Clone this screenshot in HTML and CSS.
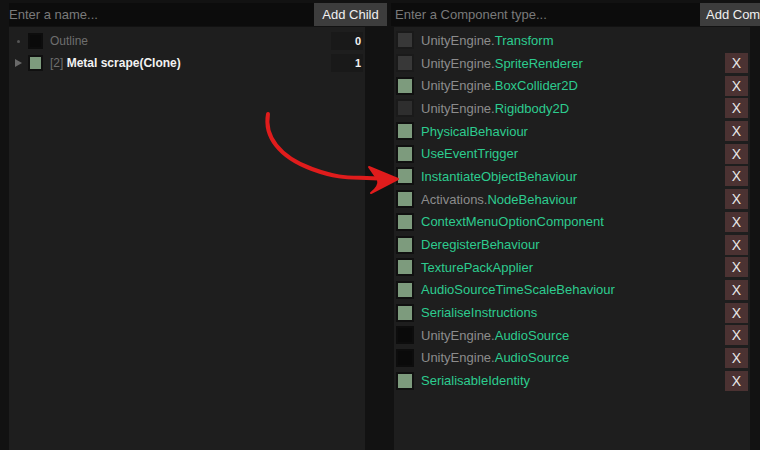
FILE: index.html
```html
<!DOCTYPE html>
<html lang="en">
<head>
    <meta charset="UTF-8">
    <title>Inspector</title>
    <link rel="stylesheet" href="styles.css">
</head>
<body>

    <div class="app">
        <!-- hierarchy -->
        <section class="column tree-column">
            <div class="toolbar">
                <input class="search" type="text" placeholder="Enter a name...">
                <button class="add-btn">Add Child</button>
            </div>
            <div class="panel">
                <div class="tree-row">
                    <span class="toggle"><span class="dot"></span></span>
                    <span class="swatch black"></span>
                    <span class="tree-name dim">Outline</span>
                    <span class="order">0</span>
                </div>
                <div class="tree-row">
                    <span class="toggle">
                        <svg width="7" height="8" viewBox="0 0 7 8"><polygon points="0,0 7,4 0,8" fill="#6a6a6a"/></svg>
                    </span>
                    <span class="swatch green"></span>
                    <span class="tree-name"><span class="dim">[2]</span> <b>Metal scrape(Clone)</b></span>
                    <span class="order">1</span>
                </div>
            </div>
        </section>

        <!-- components -->
        <section class="column component-column">
            <div class="toolbar">
                <input class="search" type="text" placeholder="Enter a Component type...">
                <button class="add-btn">Add Component</button>
            </div>
            <div class="panel">
                <div class="comp-row"><span class="swatch grey"></span><span class="comp-name"><span class="ns">UnityEngine.</span>Transform</span></div>
                <div class="comp-row"><span class="swatch grey"></span><span class="comp-name"><span class="ns">UnityEngine.</span>SpriteRenderer</span><button class="remove">X</button></div>
                <div class="comp-row"><span class="swatch green"></span><span class="comp-name"><span class="ns">UnityEngine.</span>BoxCollider2D</span><button class="remove">X</button></div>
                <div class="comp-row"><span class="swatch grey dark"></span><span class="comp-name"><span class="ns">UnityEngine.</span>Rigidbody2D</span><button class="remove">X</button></div>
                <div class="comp-row"><span class="swatch green"></span><span class="comp-name">PhysicalBehaviour</span><button class="remove">X</button></div>
                <div class="comp-row"><span class="swatch green"></span><span class="comp-name">UseEventTrigger</span><button class="remove">X</button></div>
                <div class="comp-row"><span class="swatch green"></span><span class="comp-name">InstantiateObjectBehaviour</span><button class="remove">X</button></div>
                <div class="comp-row"><span class="swatch green"></span><span class="comp-name"><span class="ns">Activations.</span>NodeBehaviour</span><button class="remove">X</button></div>
                <div class="comp-row"><span class="swatch green"></span><span class="comp-name">ContextMenuOptionComponent</span><button class="remove">X</button></div>
                <div class="comp-row"><span class="swatch green"></span><span class="comp-name">DeregisterBehaviour</span><button class="remove">X</button></div>
                <div class="comp-row"><span class="swatch green"></span><span class="comp-name">TexturePackApplier</span><button class="remove">X</button></div>
                <div class="comp-row"><span class="swatch green"></span><span class="comp-name">AudioSourceTimeScaleBehaviour</span><button class="remove">X</button></div>
                <div class="comp-row"><span class="swatch green"></span><span class="comp-name">SerialiseInstructions</span><button class="remove">X</button></div>
                <div class="comp-row"><span class="swatch black"></span><span class="comp-name"><span class="ns">UnityEngine.</span>AudioSource</span><button class="remove">X</button></div>
                <div class="comp-row"><span class="swatch black"></span><span class="comp-name"><span class="ns">UnityEngine.</span>AudioSource</span><button class="remove">X</button></div>
                <div class="comp-row"><span class="swatch green"></span><span class="comp-name">SerialisableIdentity</span><button class="remove">X</button></div>
            </div>
        </section>
    </div>

    <!-- hand drawn annotation on top -->
    <svg class="annotation" width="760" height="450" viewBox="0 0 760 450">
        <path d="M268 114 C 264 136, 279 157, 312 169 S 352 176, 384 179" fill="none" stroke="#e01c1c" stroke-width="4" stroke-linecap="round"/>
        <path d="M369 167 L 398 179 L 371 193 Q 380 186, 378 180 Z" fill="#e01c1c" stroke="#e01c1c" stroke-width="2" stroke-linejoin="round"/>
    </svg>

</body>
</html>
```

FILE: styles.css
```css
body {
    margin: 0;
    background-color: #121212;
    font-family: "Liberation Sans", Arial, sans-serif;
    overflow: hidden;
}

.app {
    display: flex;
    height: 100vh;
    padding-left: 9px;
}

.column {
    display: flex;
    flex-direction: column;
}

.tree-column {
    width: 378px;
    flex: none;
}

.component-column {
    margin-left: 4px;
    flex: 1;
    min-width: 0;
}

/* top bars */
.toolbar {
    display: flex;
    height: 23px;
    margin-top: 3px;
    margin-bottom: 1px;
}

.search {
    flex: 1;
    min-width: 0;
    background-color: #0c0c0c;
    border: none;
    outline: none;
    padding: 0;
    color: #dddddd;
    font-family: "Liberation Sans", Arial, sans-serif;
    font-size: 13px;
}

    .search::placeholder {
        color: #7a7a7a;
    }

.add-btn {
    flex: none;
    width: 73px;
    padding: 0;
    background-color: #3d3d3d;
    color: #f0f0f0;
    border: none;
    font-family: "Liberation Sans", Arial, sans-serif;
    font-size: 13px;
    text-align: center;
}

.component-column .search {
    flex: none;
    width: 305px;
    padding-left: 4px;
}

.component-column .add-btn {
    width: 110px;
    text-align: left;
    padding-left: 6px;
    white-space: nowrap;
}

/* panels */
.panel {
    flex: 1;
    width: 356px;
    background-color: #1e1e1e;
    box-sizing: border-box;
    padding-top: 3px;
}

.component-column .panel {
    margin-left: 3px;
    padding-top: 2px;
}

.swatch {
    flex: none;
    display: block;
    box-sizing: border-box;
    border: 2px solid #101010;
}

    .swatch.green {
        background-color: #7d9b7d;
    }

    .swatch.grey {
        background-color: #383838;
        border-color: #1a1a1a;
    }

    .swatch.grey.dark {
        background-color: #2e2e2e;
    }

    .swatch.black {
        background-color: #0a0a0a;
        border-color: #0d0d0d;
    }

/* hierarchy rows */
.tree-row {
    display: flex;
    align-items: center;
    height: 22px;
    font-size: 12px;
    color: #f2f2f2;
}

    .tree-row .toggle {
        width: 12px;
        margin-left: 3px;
        display: flex;
        justify-content: center;
        align-items: center;
    }

    .tree-row .dot {
        width: 3px;
        height: 3px;
        border-radius: 50%;
        background-color: #555555;
    }

    .tree-row .swatch {
        width: 15px;
        height: 16px;
        margin-left: 4px;
    }

.tree-name {
    margin-left: 7px;
}

.dim {
    color: #6e6e6e;
}

.order {
    margin-left: auto;
    margin-right: 2px;
    width: 32px;
    height: 18px;
    box-sizing: border-box;
    padding-right: 2px;
    background-color: #191919;
    text-align: right;
    font-size: 11px;
    font-weight: bold;
    line-height: 18px;
    color: #f2f2f2;
}

/* component rows */
.comp-row {
    display: flex;
    align-items: center;
    height: 22.7px;
    font-size: 13px;
}

    .comp-row .swatch {
        width: 18px;
        height: 18px;
        margin-left: 2px;
    }

.comp-name {
    margin-left: 7px;
    color: #2dcc8f;
}

.ns {
    color: #8c8c8c;
}

.remove {
    margin-left: auto;
    margin-right: 2px;
    width: 23px;
    height: 20px;
    padding: 0;
    border: none;
    background-color: #4b3232;
    color: #e8e8e8;
    font-family: "Liberation Sans", Arial, sans-serif;
    font-size: 14px;
}

.annotation {
    position: absolute;
    left: 0;
    top: 0;
    pointer-events: none;
}
```
